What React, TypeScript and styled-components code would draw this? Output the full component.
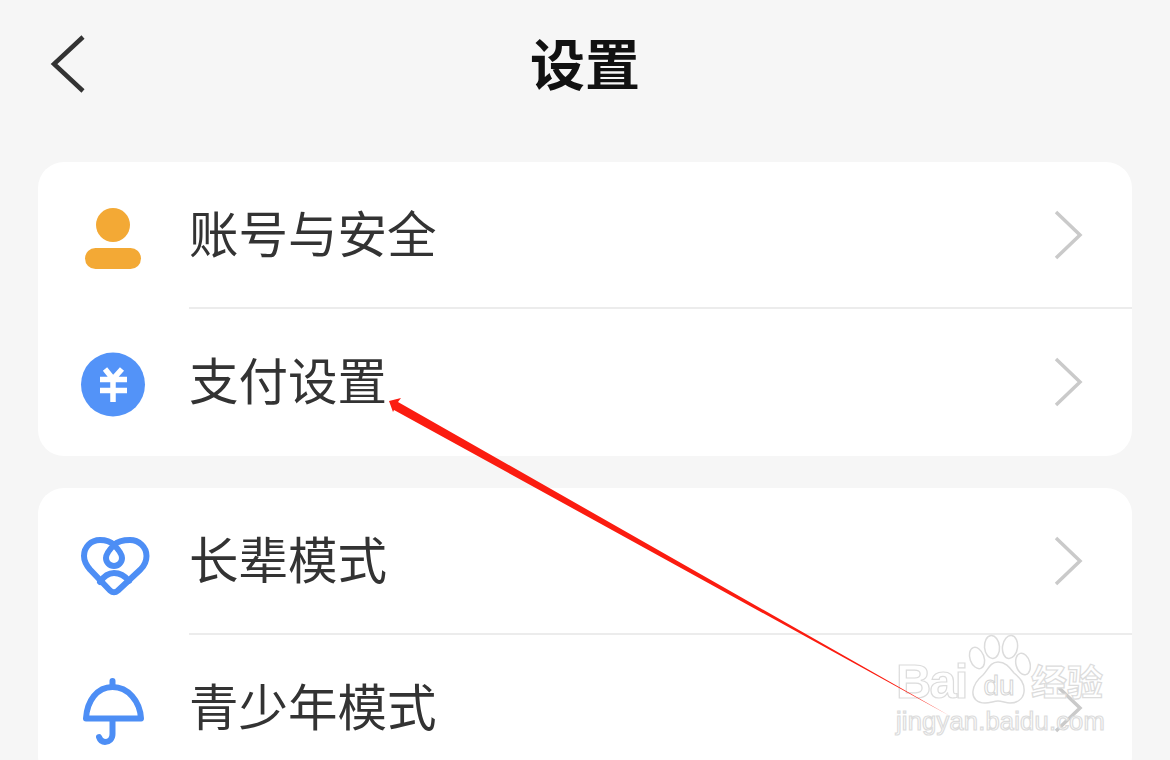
import React from 'react';
import styled, { createGlobalStyle } from 'styled-components';

const GlobalStyle = createGlobalStyle`
  html, body {
    margin: 0;
    padding: 0;
    background: #f6f6f6;
  }
`;

const Page = styled.div`
  position: relative;
  width: 1170px;
  height: 760px;
  overflow: hidden;
  background: #f6f6f6;
  font-family: "Noto Sans CJK SC", "Liberation Sans", sans-serif;
  color: #333;
`;

const Header = styled.header`
  display: flex;
  align-items: center;
  justify-content: center;
  height: 130px;
  margin-bottom: 32px;
`;

const BackIcon = styled.svg`
  position: absolute;
  left: 48px;
  top: 32px;
  width: 40px;
  height: 64px;
`;

const Title = styled.h1`
  margin: 0 0 7px;
  font-size: 55px;
  font-weight: 700;
  color: #111;
  line-height: 1;
`;

const Card = styled.section`
  margin: 0 38px 32px;
  background: #fff;
  border-radius: 26px;
  overflow: hidden;
`;

const Row = styled.div`
  display: flex;
  align-items: stretch;
`;

const IconSlot = styled.div`
  flex: 0 0 151px;
  display: flex;
  align-items: center;
  padding-left: 39px;
  box-sizing: border-box;
`;

const RowBody = styled.div<{ $divider?: boolean }>`
  flex: 1;
  box-sizing: border-box;
  height: 147px;
  display: flex;
  align-items: center;
  justify-content: space-between;
  padding-right: 46px;
  border-bottom: 2px solid ${props => (props.$divider ? '#ececec' : 'transparent')};
`;

const Label = styled.span`
  font-size: 49.5px;
  line-height: 1;
  color: #333;
  padding-bottom: 6px;
`;

const Glyph = styled.svg`
  display: block;
  width: 72px;
  height: 72px;
  overflow: visible;
`;

const Chevron = styled.svg`
  width: 36px;
  height: 54px;
  flex: none;
`;

const Annotation = styled.svg`
  position: absolute;
  left: 0;
  top: 0;
  width: 1170px;
  height: 760px;
  pointer-events: none;
`;

const Watermark = styled.div`
  position: absolute;
  left: 896px;
  top: 634px;
  width: 214px;
  height: 104px;
  font-family: "Liberation Sans", "Noto Sans CJK SC", sans-serif;
  color: #fff;
  -webkit-text-stroke: 1.2px #dcdcdc;
`;

const Brand = styled.div`
  display: flex;
  align-items: flex-end;
  height: 68px;
`;

const BrandLatin = styled.span`
  font-size: 49px;
  font-weight: 700;
  line-height: 42px;
  letter-spacing: -2px;
  width: 71px;
  flex: none;
`;

const Paw = styled.svg`
  width: 64px;
  height: 70px;
  flex: none;
  margin-bottom: -2px;
`;

const BrandCjk = styled.span`
  font-family: "Noto Sans CJK SC", sans-serif;
  font-size: 36px;
  font-weight: 700;
  line-height: 44px;
  white-space: nowrap;
`;

const Domain = styled.div`
  font-size: 25.5px;
  line-height: 30px;
  margin-top: 4px;
  letter-spacing: 0.2px;
  white-space: nowrap;
`;

const PersonIcon = () => (
  <Glyph viewBox="0 0 72 72">
    <circle cx="36" cy="25" r="17" fill="#f3a935" />
    <rect x="8" y="48" width="56" height="21" rx="10.5" fill="#f3a935" />
  </Glyph>
);

const YuanIcon = () => (
  <Glyph viewBox="0 0 72 72">
    <circle cx="36" cy="37.5" r="32" fill="#5393f8" />
    <path
      d="M28 22l8 10 9-10M23 32.5h27M23 43.5h27M36 32v23"
      fill="none"
      stroke="#fff"
      strokeWidth="5.500"
    />
  </Glyph>
);

const HeartIcon = () => (
  <Glyph viewBox="0 0 72 72">
    <g fill="none" stroke="#4d8ef5" strokeWidth="6" strokeLinecap="round" strokeLinejoin="round">
      <path d="M37 19C33 15 28 14 23 14 14 14 7 21 7 30c0 6 3 10 6 13.500l20 21q4 3.500 8 0l22.500-21C67 40 69.500 36 69.500 30c0-9-7.500-16-16.500-16-6 0-12 1-16 5z" />
      <path d="M37 19c-5 5-8 9-8 13a8 8 0 0 0 16 0c0-4-3-8-8-13z" />
      <path d="M23 56c4-6 9-9 14-9 6 0 11 3 15 8" />
    </g>
  </Glyph>
);

const UmbrellaIcon = () => (
  <Glyph viewBox="0 0 72 72">
    <g fill="none" stroke="#4d8ef5" strokeWidth="6" strokeLinecap="round" strokeLinejoin="round">
      <path d="M35.500 8v5" />
      <path d="M9 45.500C10 28 20 14 35.500 14S63 28 64 45.500z" />
      <path d="M35.500 46v15c0 5-3.500 8-7.500 8-3 0-5-2-6-5" />
    </g>
  </Glyph>
);

const RowChevron = () => (
  <Chevron viewBox="0 0 36 54">
    <path d="M6 4l24 23L6 50" fill="none" stroke="#cacaca" strokeWidth="3.500" />
  </Chevron>
);

const rows = [
  [
    { label: '账号与安全', icon: <PersonIcon /> },
    { label: '支付设置', icon: <YuanIcon /> },
  ],
  [
    { label: '长辈模式', icon: <HeartIcon /> },
    { label: '青少年模式', icon: <UmbrellaIcon /> },
  ],
];

export default function App() {
  return (
    <Page>
      <GlobalStyle />
      <Header>
        <BackIcon viewBox="0 0 40 64">
          <path d="M35 5L6 32l29 27" fill="none" stroke="#333" strokeWidth="4.500" />
        </BackIcon>
        <Title>设置</Title>
      </Header>

      {rows.map((group, i) => (
        <Card key={i}>
          {group.map((row, j) => (
            <Row key={row.label}>
              <IconSlot>{row.icon}</IconSlot>
              <RowBody $divider={j === 0}>
                <Label>{row.label}</Label>
                <RowChevron />
              </RowBody>
            </Row>
          ))}
        </Card>
      ))}

      <Watermark>
        <Brand>
          <BrandLatin>Bai</BrandLatin>
          <Paw viewBox="0 0 64 70">
            <g fill="#fff" stroke="#dcdcdc" strokeWidth="1.500">
              <ellipse cx="10" cy="24" rx="7" ry="11" transform="rotate(-20 10 24)" />
              <ellipse cx="25" cy="13" rx="7.500" ry="11.500" transform="rotate(-5 25 13)" />
              <ellipse cx="43" cy="13" rx="7.500" ry="11.500" transform="rotate(8 43 13)" />
              <ellipse cx="56" cy="30" rx="7" ry="11" transform="rotate(-15 56 30)" />
              <path d="M31 28c8 0 12 6 16 11 6 5 11 10 10 19-1 8-8 11-14 11-4 0-8-2-12-2s-8 2-13 2c-7 0-13-4-12-12 1-8 5-12 10-16 5-5 7-13 15-13z" />
            </g>
            <text x="32" y="61" textAnchor="middle" fontFamily="Liberation Sans" fontSize="28" fill="#fff" stroke="#d4d4d4" strokeWidth="1">du</text>
          </Paw>
          <BrandCjk>经验</BrandCjk>
        </Brand>
        <Domain>jingyan.baidu.com</Domain>
      </Watermark>

      <Annotation viewBox="0 0 1170 760">
        <polygon
          points="389,401 401,398 398,402 950,716 394,410 393,412"
          fill="#fb1c10"
        />
      </Annotation>
    </Page>
  );
}
